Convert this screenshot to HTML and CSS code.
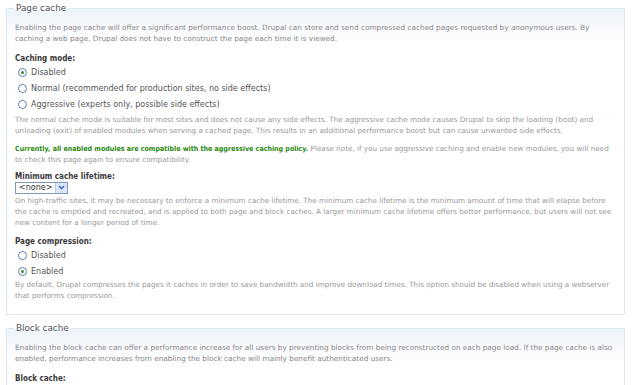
FILE: index.html
```html
<!DOCTYPE html>
<html lang="en">
<head>
    <meta charset="UTF-8">
    <title>Performance settings</title>
    <link rel="stylesheet" href="styles.css">
</head>
<body>
    <!-- Page cache -->
    <fieldset class="group">
        <legend>Page cache</legend>
        <p class="intro">Enabling the page cache will offer a significant performance boost. Drupal can store and send compressed cached pages requested by <em>anonymous</em> users. By caching a web page, Drupal does not have to construct the page each time it is viewed.</p>

        <div class="form-item">
            <div class="item-title">Caching mode:</div>
            <label class="option"><span class="radio checked"></span>Disabled</label>
            <label class="option"><span class="radio"></span>Normal (recommended for production sites, no side effects)</label>
            <label class="option"><span class="radio"></span>Aggressive (experts only, possible side effects)</label>
            <div class="description">The normal cache mode is suitable for most sites and does not cause any side effects. The aggressive cache mode causes Drupal to skip the loading (boot) and unloading (exit) of enabled modules when serving a cached page. This results in an additional performance boost but can cause unwanted side effects.</div>
        </div>

        <div class="description notice"><strong class="ok">Currently, all enabled modules are compatible with the aggressive caching policy.</strong> Please note, if you use aggressive caching and enable new modules, you will need to check this page again to ensure compatibility.</div>

        <div class="form-item">
            <div class="item-title">Minimum cache lifetime:</div>
            <div class="select">
                <span class="select-value">&lt;none&gt;</span>
                <span class="select-arrow">
                    <svg width="7" height="5" viewBox="0 0 7 5"><path d="M1 1 L3.5 3.5 L6 1" fill="none" stroke="#3a6fc4" stroke-width="1.6"/></svg>
                </span>
            </div>
            <div class="description">On high-traffic sites, it may be necessary to enforce a minimum cache lifetime. The minimum cache lifetime is the minimum amount of time that will elapse before the cache is emptied and recreated, and is applied to both page and block caches. A larger minimum cache lifetime offers better performance, but users will not see new content for a longer period of time.</div>
        </div>

        <div class="form-item last">
            <div class="item-title">Page compression:</div>
            <label class="option"><span class="radio"></span>Disabled</label>
            <label class="option"><span class="radio checked"></span>Enabled</label>
            <div class="description">By default, Drupal compresses the pages it caches in order to save bandwidth and improve download times. This option should be disabled when using a webserver that performs compression.</div>
        </div>
    </fieldset>

    <!-- Block cache -->
    <fieldset class="group">
        <legend>Block cache</legend>
        <p class="intro">Enabling the block cache can offer a performance increase for all users by preventing blocks from being reconstructed on each page load. If the page cache is also enabled, performance increases from enabling the block cache will mainly benefit authenticated users.</p>
        <div class="form-item">
            <div class="item-title">Block cache:</div>
        </div>
    </fieldset>
</body>
</html>
```

FILE: styles.css
```css
body {
    margin: 0;
    padding: 2px 15px 0 6px;
    font-family: "DejaVu Sans", Verdana, sans-serif;
    color: #555;
    background: #fff;
}

/* Fieldsets */
.group {
    margin: 0 0 7px 0;
    padding: 8px 8px 13px 8px;
    border: 1px solid #dde8f3;
    background: linear-gradient(#edf3fa 0, #fff 34px);
}

.group legend {
    padding: 0 2px;
    margin-left: -1px;
    font-size: 8.8px;
    line-height: 12px;
    color: #555;
}

.intro {
    margin: 0 0 8px 0;
    font-size: 7.3px;
    line-height: 11px;
    color: #888;
}

.intro em {
    font-style: italic;
}

.form-item {
    margin-bottom: 7px;
}

.form-item.last {
    margin-bottom: 0;
}

.item-title {
    padding-top: 1px;
    font-family: "DejaVu Sans Condensed", "DejaVu Sans", sans-serif;
    font-size: 8px;
    font-weight: bold;
    color: #3a3a3a;
    line-height: 11px;
}

/* Radios */
.option {
    display: flex;
    align-items: center;
    height: 16px;
    font-size: 8px;
    color: #555;
}

.radio {
    flex: none;
    width: 7px;
    height: 7px;
    margin: 0 4px 0 3px;
    border: 1px solid #5a7fa8;
    border-radius: 50%;
    background: #fff;
    position: relative;
}

.radio.checked::after {
    content: "";
    position: absolute;
    left: 2px;
    top: 2px;
    width: 3px;
    height: 3px;
    border-radius: 50%;
    background: #2e9a2e;
}

.description {
    font-size: 7.21px;
    line-height: 11px;
    color: #999;
    margin-top: 1.5px;
}

.last .description {
    margin-top: 0;
}

.notice {
    margin: 0 0 5px 0;
}

.ok {
    font-family: "DejaVu Sans Condensed", "DejaVu Sans", sans-serif;
    font-size: 7.05px;
    color: #2a8a10;
}

/* Select */
.select {
    display: flex;
    width: 51px;
    height: 10px;
    border: 1px solid #7f9db9;
    background: #fff;
}

.select-value {
    flex: 1;
    font-size: 8px;
    line-height: 10px;
    padding-left: 3px;
    color: #333;
}

.select-arrow {
    width: 11px;
    display: flex;
    align-items: center;
    justify-content: center;
    background: #dbe6fb;
    border-left: 1px solid #b7c9ef;
}
```
